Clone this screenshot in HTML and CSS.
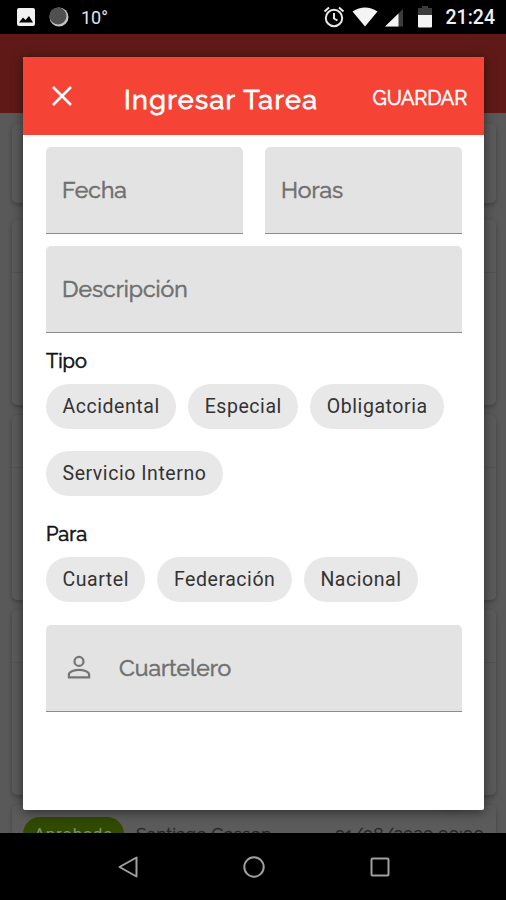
FILE: index.html
```html
<!DOCTYPE html>
<html lang="es">
<head>
	<meta charset="UTF-8">
	<title>Ingresar Tarea</title>
	<link rel="stylesheet" href="styles.css">
</head>
<body>
<div class="status">
	<svg class="s-img" width="20" height="20" viewBox="0 0 20 20"><rect x="1" y="1" width="18" height="18" rx="2" fill="#f1f1f1"/><path d="M3 15.500L7 10.500L9.500 13L13 9L17 15.500Z" fill="#000"/></svg>
	<svg class="s-moon" width="20" height="20" viewBox="0 0 20 20"><circle cx="10" cy="10" r="9.500" fill="#c4c4c4"/><circle cx="9" cy="9" r="8.500" fill="#505050"/></svg>
	<span class="temp">10°</span>
	<svg class="s-alarm" width="22" height="22" viewBox="0 0 22 22" fill="none" stroke="#e8e8e8" stroke-width="2"><circle cx="11" cy="12" r="8.200"/><path d="M11 7V12.500L14.500 14.500M1.500 5.500L6 1.500M20.500 5.500L16 1.500"/></svg>
	<svg class="s-wifi" width="26" height="20" viewBox="0 0 26 20"><path d="M0.500 4.500Q13 -3.500 25.500 4.500L13 19.500Z" fill="#f4f4f4"/></svg>
	<svg class="s-cell" width="18" height="18" viewBox="0 0 18 18"><path d="M0 17.500L18 0V17.500Z" fill="#3c3c3c"/><path d="M0 17.500L13.500 4.400V17.500Z" fill="#f4f4f4"/></svg>
	<svg class="s-bat" width="14" height="22" viewBox="0 0 14 22"><path d="M4 0H10V2H14V9H0V2H4Z" fill="#3c3c3c"/><path d="M0 9H14V20.500Q14 21.500 13 21.500H1Q0 21.500 0 20.500Z" fill="#f4f4f4"/></svg>
	<span class="clock">21:24</span>
</div>

<div class="app">
	<div class="appbar"></div>
	<div class="list">
		<div class="card first"></div>
		<div class="card"><div class="card-head"></div></div>
		<div class="card"><div class="card-head"></div></div>
		<div class="card"><div class="card-head"></div></div>
		<div class="card">
			<div class="card-head">
				<span class="badge">Aprobada</span>
				<span class="name">Santiago Cosson</span>
				<span class="date">01/08/2020 00:00</span>
			</div>
		</div>
	</div>
	<div class="fab"></div>

	<div class="dialog">
		<div class="dialog-bar">
			<svg class="close" width="20" height="20" viewBox="0 0 20 20"><path d="M1 1L19 19M19 1L1 19" stroke="#fff" stroke-width="2.600"/></svg>
			<span class="title">Ingresar Tarea</span>
			<span class="save">GUARDAR</span>
		</div>
		<div class="form">
			<div class="row">
				<div class="field"><span>Fecha</span></div>
				<div class="field"><span>Horas</span></div>
			</div>
			<div class="field"><span>Descripción</span></div>
			<div class="label">Tipo</div>
			<div class="chips">
				<span class="chip">Accidental</span>
				<span class="chip">Especial</span>
				<span class="chip">Obligatoria</span>
				<span class="chip">Servicio Interno</span>
			</div>
			<div class="label para">Para</div>
			<div class="chips">
				<span class="chip">Cuartel</span>
				<span class="chip">Federación</span>
				<span class="chip">Nacional</span>
			</div>
			<div class="field person">
				<svg width="24" height="24" viewBox="0 0 24 24" fill="none" stroke="#757575" stroke-width="2.200"><circle cx="12" cy="6.400" r="4.500"/><path d="M1.900 22.400V19.500C1.900 16.500 8 14.800 12 14.800S22.100 16.500 22.100 19.500V22.400Z"/></svg>
				<span>Cuartelero</span>
			</div>
		</div>
	</div>
</div>

<div class="nav">
	<svg width="22" height="24" viewBox="0 0 22 24" fill="none" stroke="#a0a0a0" stroke-width="2"><path d="M19.500 2.500V21.500L2.500 12Z" stroke-linejoin="round"/></svg>
	<svg width="22" height="24" viewBox="0 0 22 24" fill="none" stroke="#a0a0a0" stroke-width="2"><circle cx="11" cy="12" r="9.700"/></svg>
	<svg width="22" height="24" viewBox="0 0 22 24" fill="none" stroke="#a0a0a0" stroke-width="2"><rect x="2.500" y="3.500" width="17" height="17" rx="1"/></svg>
</div>
</body>
</html>
```

FILE: styles.css
```css
*{margin:0;padding:0;box-sizing:border-box;}
body{width:506px;height:900px;overflow:hidden;background:#000;font-family:Raleway,Lato,"Liberation Sans",sans-serif;}
svg{display:block;flex:none;}

.status{display:flex;align-items:center;height:34px;padding:0 11px 0 16px;background:#000;color:#f1f1f1;font-family:Roboto,sans-serif;font-size:20px;}
.s-moon{margin-left:13px;}
.temp{margin-left:12px;font-size:18px;color:#e4e4e4;}
.s-alarm{margin-left:auto;}
.s-wifi{margin-left:7px;}
.s-cell{margin-left:7px;margin-top:2px;}
.s-bat{margin-left:15px;}
.clock{margin-left:14px;font-weight:500;font-size:19.500px;}

.app{position:relative;height:799px;overflow:hidden;background:#595959;}
.appbar{height:79px;background:#5f1a17;}
.list{padding:11px 10px 0 12px;}
.card{height:185px;margin-bottom:10px;border-radius:5px;background:#5b5b5b;box-shadow:0 2px 4px rgba(0,0,0,.25);}
.card.first{height:79px;margin-bottom:17px;}
.card-head{display:flex;height:53px;padding-top:12px;border-bottom:1px solid #535353;font-size:18px;color:#262626;}
.badge{width:101px;height:34px;margin-left:11px;border-radius:17px;background:#304a00;color:#858a78;font-family:Roboto,sans-serif;font-size:17px;letter-spacing:.7px;line-height:34px;text-align:center;}
.name{margin-left:12px;font-size:17.500px;line-height:34px;-webkit-text-stroke:.3px #262626;}
.date{margin-left:auto;margin-right:12px;font-size:17.500px;line-height:34px;-webkit-text-stroke:.3px #262626;}
.fab{position:absolute;right:31px;bottom:27px;width:50px;height:50px;border-radius:50%;background:#3a3a3a;box-shadow:0 2px 6px rgba(0,0,0,.5);}

.dialog{position:absolute;left:23px;top:23px;width:461px;height:753px;border-radius:2px;background:#fff;box-shadow:0 2px 12px rgba(0,0,0,.5);overflow:hidden;}
.dialog-bar{display:flex;align-items:center;height:78px;padding:0 17px 0 29px;background:#f54336;color:#fff;}
.title{margin-left:52px;margin-top:6px;font-size:27px;letter-spacing:1.400px;-webkit-text-stroke:1px #fff;}
.save{margin-left:auto;margin-top:4px;font-size:20px;letter-spacing:-.2px;-webkit-text-stroke:.6px #fff;}
.form{padding:12px 22px 0 23px;}
.row{display:flex;gap:22px;margin-bottom:12px;}
.field{flex:1;display:flex;align-items:center;height:87px;padding:0 0 2px 16px;border-bottom:1px solid #8c8c8c;border-radius:5px 5px 0 0;background:#e3e3e3;color:#6f6f6f;font-size:23px;-webkit-text-stroke:.6px #6f6f6f;}
.label{margin-top:16px;height:24px;font-size:20px;line-height:24px;color:#111;-webkit-text-stroke:.6px #111;}
.chips{display:flex;flex-wrap:wrap;gap:22px 12px;margin-top:11px;}
.chip{height:45px;padding:0 16.500px;border-radius:23px;background:#e8e8e8;color:#333;font-family:Roboto,sans-serif;font-size:19.500px;line-height:45px;letter-spacing:.55px;}
.label.para{margin-top:26px;}
.person{margin-top:23px;padding:0 0 2px 21px;}
.person span{margin-left:28px;}

.nav{display:flex;justify-content:space-between;height:67px;padding:22px 115px 0 117px;background:#000;}
```
